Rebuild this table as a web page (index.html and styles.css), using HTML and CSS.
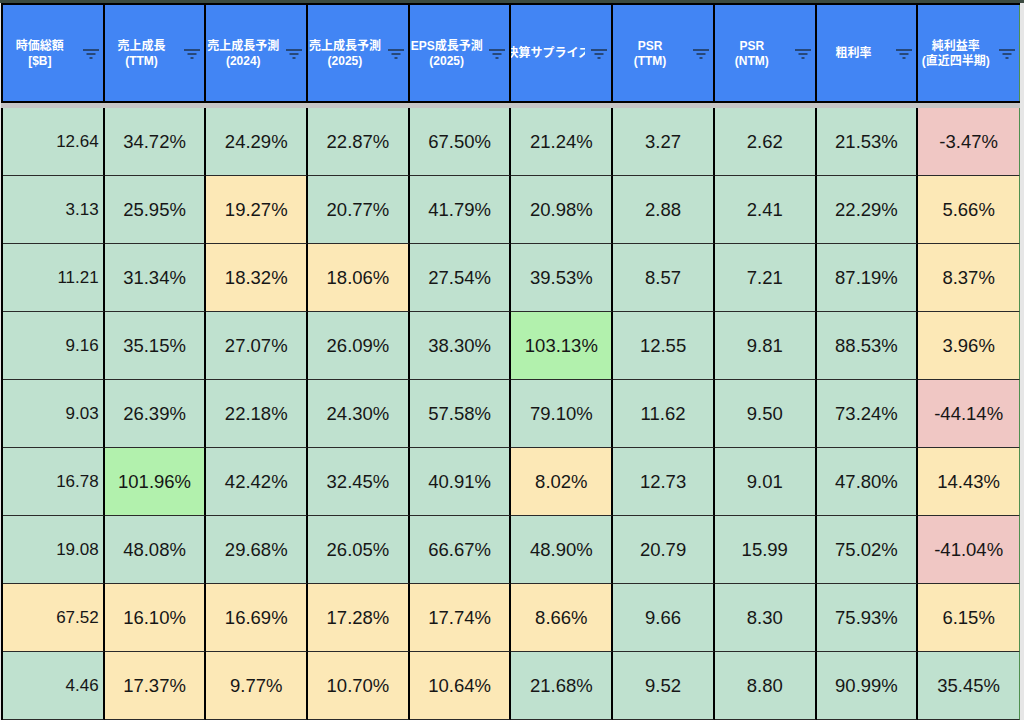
FILE: index.html
```html
<!DOCTYPE html>
<html lang="ja">
<head>
<meta charset="utf-8">
<title>Sheet</title>
<link rel="stylesheet" href="styles.css">
</head>
<body>
<div class="topbar"></div>
<div class="sheet">
  <div class="head">
    <div class="hc"><div class="ht"><span>時価総額<br>[$B]</span></div><svg class="filt" viewBox="0 0 16 10"><path d="M0 1H16M3.5 5H12.5M6.5 9H9.5"/></svg></div>
    <div class="hc"><div class="ht"><span>売上成長<br>(TTM)</span></div><svg class="filt" viewBox="0 0 16 10"><path d="M0 1H16M3.5 5H12.5M6.5 9H9.5"/></svg></div>
    <div class="hc"><div class="ht"><span>売上成長予測<br>(2024)</span></div><svg class="filt" viewBox="0 0 16 10"><path d="M0 1H16M3.5 5H12.5M6.5 9H9.5"/></svg></div>
    <div class="hc"><div class="ht"><span>売上成長予測<br>(2025)</span></div><svg class="filt" viewBox="0 0 16 10"><path d="M0 1H16M3.5 5H12.5M6.5 9H9.5"/></svg></div>
    <div class="hc"><div class="ht"><span>EPS成長予測<br>(2025)</span></div><svg class="filt" viewBox="0 0 16 10"><path d="M0 1H16M3.5 5H12.5M6.5 9H9.5"/></svg></div>
    <div class="hc"><div class="ht"><span>決算サプライズ</span></div><svg class="filt" viewBox="0 0 16 10"><path d="M0 1H16M3.5 5H12.5M6.5 9H9.5"/></svg></div>
    <div class="hc"><div class="ht"><span>PSR<br>(TTM)</span></div><svg class="filt" viewBox="0 0 16 10"><path d="M0 1H16M3.5 5H12.5M6.5 9H9.5"/></svg></div>
    <div class="hc"><div class="ht"><span>PSR<br>(NTM)</span></div><svg class="filt" viewBox="0 0 16 10"><path d="M0 1H16M3.5 5H12.5M6.5 9H9.5"/></svg></div>
    <div class="hc"><div class="ht"><span>粗利率</span></div><svg class="filt" viewBox="0 0 16 10"><path d="M0 1H16M3.5 5H12.5M6.5 9H9.5"/></svg></div>
    <div class="hc last"><div class="ht"><span>純利益率<br>(直近四半期)</span></div><svg class="filt" viewBox="0 0 16 10"><path d="M0 1H16M3.5 5H12.5M6.5 9H9.5"/></svg></div>
  </div>
  <div class="gap"></div>
  <div class="body">
    <div class="c g first">12.64</div><div class="c g">34.72%</div><div class="c g">24.29%</div><div class="c g">22.87%</div><div class="c g">67.50%</div><div class="c g">21.24%</div><div class="c g">3.27</div><div class="c g">2.62</div><div class="c g">21.53%</div><div class="c r last">-3.47%</div>

    <div class="c g first">3.13</div><div class="c g">25.95%</div><div class="c y">19.27%</div><div class="c g">20.77%</div><div class="c g">41.79%</div><div class="c g">20.98%</div><div class="c g">2.88</div><div class="c g">2.41</div><div class="c g">22.29%</div><div class="c y last">5.66%</div>

    <div class="c g first">11.21</div><div class="c g">31.34%</div><div class="c y">18.32%</div><div class="c y">18.06%</div><div class="c g">27.54%</div><div class="c g">39.53%</div><div class="c g">8.57</div><div class="c g">7.21</div><div class="c g">87.19%</div><div class="c y last">8.37%</div>

    <div class="c g first">9.16</div><div class="c g">35.15%</div><div class="c g">27.07%</div><div class="c g">26.09%</div><div class="c g">38.30%</div><div class="c b">103.13%</div><div class="c g">12.55</div><div class="c g">9.81</div><div class="c g">88.53%</div><div class="c y last">3.96%</div>

    <div class="c g first">9.03</div><div class="c g">26.39%</div><div class="c g">22.18%</div><div class="c g">24.30%</div><div class="c g">57.58%</div><div class="c g">79.10%</div><div class="c g">11.62</div><div class="c g">9.50</div><div class="c g">73.24%</div><div class="c r last">-44.14%</div>

    <div class="c g first">16.78</div><div class="c b">101.96%</div><div class="c g">42.42%</div><div class="c g">32.45%</div><div class="c g">40.91%</div><div class="c y">8.02%</div><div class="c g">12.73</div><div class="c g">9.01</div><div class="c g">47.80%</div><div class="c y last">14.43%</div>

    <div class="c g first">19.08</div><div class="c g">48.08%</div><div class="c g">29.68%</div><div class="c g">26.05%</div><div class="c g">66.67%</div><div class="c g">48.90%</div><div class="c g">20.79</div><div class="c g">15.99</div><div class="c g">75.02%</div><div class="c r last">-41.04%</div>

    <div class="c y first">67.52</div><div class="c y">16.10%</div><div class="c y">16.69%</div><div class="c y">17.28%</div><div class="c y">17.74%</div><div class="c y">8.66%</div><div class="c g">9.66</div><div class="c g">8.30</div><div class="c g">75.93%</div><div class="c y last">6.15%</div>

    <div class="c g first">4.46</div><div class="c y">17.37%</div><div class="c y">9.77%</div><div class="c y">10.70%</div><div class="c y">10.64%</div><div class="c g">21.68%</div><div class="c g">9.52</div><div class="c g">8.80</div><div class="c g">90.99%</div><div class="c g last">35.45%</div>
  </div>
</div>
</body>
</html>
```

FILE: styles.css
```css
html, body {
  margin: 0;
  padding: 0;
}
body {
  background: #e6e6e6;
  font-family: "Liberation Sans", "Noto Sans CJK JP", Arial, sans-serif;
  overflow: hidden;
  width: 1024px;
  height: 720px;
}
.topbar {
  height: 3px;
  background: #3b4a40;
}
.sheet {
  width: 1019px;
  margin-left: 1px;
  background: #ffffff;
}
.head {
  display: grid;
  grid-template-columns: repeat(10, 1fr);
  border-top: 2px solid #000;
  border-bottom: 2px solid #000;
  border-left: 2px solid #000;
}
.hc {
  height: 96px;
  background: #4285f4;
  border-right: 2px solid #000;
  display: flex;
  align-items: center;
  min-width: 0;
}
.hc.last {
  border-right: 1px solid #4f8f4f;
}
.ht {
  flex: 1;
  min-width: 0;
  overflow: hidden;
  display: flex;
  flex-direction: column;
  align-items: center;
  color: #ffffff;
  font-weight: bold;
  font-size: 12px;
  line-height: 15px;
  padding-top: 1px;
}
.ht span {
  white-space: nowrap;
  text-align: center;
  flex: none;
}
.filt {
  width: 16px;
  height: 10px;
  margin: 2px 4px 0 6px;
  flex: none;
}
.filt path {
  stroke: #1f3550;
  stroke-width: 1.6;
  fill: none;
}
.gap {
  height: 5px;
  background: #c6c6c6;
}
.body {
  display: grid;
  grid-template-columns: repeat(10, 1fr);
  border-left: 2px solid #000;
}
.c {
  height: 67px;
  border-right: 2px solid #000;
  border-bottom: 1px solid #2a2a2a;
  display: flex;
  align-items: center;
  justify-content: center;
  font-size: 18.5px;
  color: #161616;
  min-width: 0;
}
.c.first {
  justify-content: flex-end;
  padding-right: 4px;
  font-size: 17px;
}
.c.last {
  border-right: 1px solid #4f8f4f;
}
.g { background: #bfe1cf; }
.y { background: #fce8b6; }
.r { background: #f0c7c4; }
.b { background: #b2f1ad; }
```
